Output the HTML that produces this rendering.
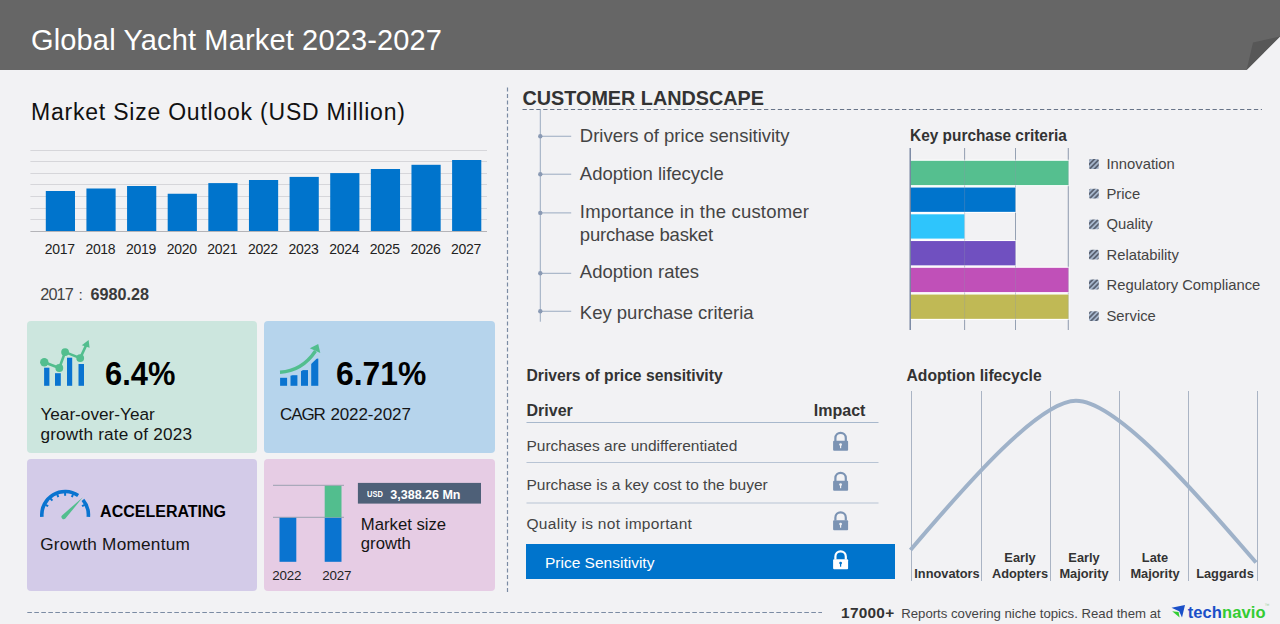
<!DOCTYPE html>
<html><head><meta charset="utf-8"><title>Global Yacht Market 2023-2027</title>
<style>
html,body{margin:0;padding:0;}
body{width:1280px;height:624px;overflow:hidden;position:relative;background:#f2f2f4;font-family:"Liberation Sans", sans-serif;}
.t{position:absolute;white-space:nowrap;line-height:1;}
.r{position:absolute;}
svg.g{position:absolute;left:0;top:0;}
</style></head><body>
<div class="r" style="left:27.0px;top:321.3px;width:230.0px;height:131.8px;background:#cce6de;border-radius:4px"></div>
<div class="r" style="left:264.3px;top:321.3px;width:230.5px;height:131.8px;background:#b6d4ec;border-radius:4px"></div>
<div class="r" style="left:27.2px;top:459.1px;width:229.7px;height:131.6px;background:#d3cbe8;border-radius:4px"></div>
<div class="r" style="left:264.1px;top:459.1px;width:230.6px;height:131.6px;background:#e6cce4;border-radius:4px"></div>
<svg class="g" width="1280" height="624" viewBox="0 0 1280 624">
<defs><pattern id="hatch" patternUnits="userSpaceOnUse" width="3.5" height="3.5" patternTransform="rotate(45)"><rect width="3.5" height="3.5" fill="#a6b6cc"/><rect width="1.75" height="3.5" fill="#5a6272"/></pattern></defs>
<polygon points="0,0 1280,0 1280,36.5 1246.6,70 0,70" fill="#666666"/>
<polygon points="1253,42.5 1280,36.5 1246.6,70" fill="#575757"/>
<line x1="30.4" y1="150.5" x2="487" y2="150.5" stroke="#d6d6da" stroke-width="1"/>
<line x1="30.4" y1="161.5" x2="487" y2="161.5" stroke="#d6d6da" stroke-width="1"/>
<line x1="30.4" y1="173.5" x2="487" y2="173.5" stroke="#d6d6da" stroke-width="1"/>
<line x1="30.4" y1="184.5" x2="487" y2="184.5" stroke="#d6d6da" stroke-width="1"/>
<line x1="30.4" y1="196.5" x2="487" y2="196.5" stroke="#d6d6da" stroke-width="1"/>
<line x1="30.4" y1="208.5" x2="487" y2="208.5" stroke="#d6d6da" stroke-width="1"/>
<line x1="30.4" y1="219.5" x2="487" y2="219.5" stroke="#d6d6da" stroke-width="1"/>
<line x1="30.4" y1="231.5" x2="487" y2="231.5" stroke="#b4b4b8" stroke-width="1"/>
<rect x="45.80" y="191" width="29.2" height="40.00" fill="#0074cc"/>
<rect x="86.43" y="188.5" width="29.2" height="42.50" fill="#0074cc"/>
<rect x="127.06" y="186" width="29.2" height="45.00" fill="#0074cc"/>
<rect x="167.69" y="193.75" width="29.2" height="37.25" fill="#0074cc"/>
<rect x="208.32" y="183.1" width="29.2" height="47.90" fill="#0074cc"/>
<rect x="248.95" y="180" width="29.2" height="51.00" fill="#0074cc"/>
<rect x="289.58" y="176.9" width="29.2" height="54.10" fill="#0074cc"/>
<rect x="330.21" y="173.1" width="29.2" height="57.90" fill="#0074cc"/>
<rect x="370.84" y="169" width="29.2" height="62.00" fill="#0074cc"/>
<rect x="411.47" y="164.8" width="29.2" height="66.20" fill="#0074cc"/>
<rect x="452.10" y="160" width="29.2" height="71.00" fill="#0074cc"/>
<rect x="44.1" y="367.7" width="5.3" height="18.1" fill="#0a74d0"/>
<rect x="55" y="373.2" width="5.8" height="12.6" fill="#0a74d0"/>
<rect x="67" y="357.7" width="5.2" height="28.1" fill="#0a74d0"/>
<rect x="78.5" y="364" width="5.5" height="21.8" fill="#0a74d0"/>
<polyline points="44.3,362.2 59.3,368 65.1,352.1 80.2,358.1 86.5,344.5" fill="none" stroke="#52be8e" stroke-width="2.6" stroke-linejoin="round"/>
<polygon points="88.6,340 81.8,345.2 89.6,347.8" fill="#52be8e"/>
<circle cx="44.3" cy="362.2" r="4.2" fill="#52be8e"/>
<circle cx="59.3" cy="368" r="3.9" fill="#52be8e"/>
<circle cx="65.1" cy="352.1" r="3.9" fill="#52be8e"/>
<circle cx="80.2" cy="358.1" r="3.9" fill="#52be8e"/>
<rect x="280.1" y="377.8" width="7.0" height="8.0" fill="#0a74d0"/>
<rect x="290.5" y="375.2" width="6.9" height="10.6" fill="#0a74d0"/>
<rect x="301" y="370.1" width="7.0" height="15.7" fill="#0a74d0"/>
<rect x="311.2" y="358.6" width="7.1" height="27.2" fill="#0a74d0"/>
<path d="M279,376.8 Q300,378 320,355 L320,340 L279,340 Z" fill="#b6d4ec"/>
<path d="M280,372.2 Q302,371 315.5,351" fill="none" stroke="#52be8e" stroke-width="3.4"/>
<polygon points="318.2,344 309.8,348.2 320.3,353" fill="#52be8e"/>
<path d="M41.89,516.83 A23.3,23.3 0 0 1 78.13,495.48" fill="none" stroke="#0a74d0" stroke-width="3.6"/>
<path d="M82.95,499.82 A23.3,23.3 0 0 1 88.31,516.83" fill="none" stroke="#0a74d0" stroke-width="3.6"/>
<line x1="45.50" y1="504.81" x2="48.17" y2="506.17" stroke="#0a74d0" stroke-width="2"/>
<line x1="50.38" y1="498.45" x2="52.39" y2="500.68" stroke="#0a74d0" stroke-width="2"/>
<line x1="57.22" y1="494.26" x2="58.29" y2="497.06" stroke="#0a74d0" stroke-width="2"/>
<line x1="65.10" y1="492.80" x2="65.10" y2="495.80" stroke="#0a74d0" stroke-width="2"/>
<line x1="72.98" y1="494.26" x2="71.91" y2="497.06" stroke="#0a74d0" stroke-width="2"/>
<line x1="84.70" y1="504.81" x2="82.03" y2="506.17" stroke="#0a74d0" stroke-width="2"/>
<path d="M62.2,515.2 L82.8,497.3 L65.4,518.6 A2.2,2.2 0 0 1 62.2,515.2 Z" fill="#52be8e"/>
<line x1="273" y1="485.3" x2="344" y2="485.3" stroke="#9aa0b0" stroke-width="1"/>
<line x1="273" y1="517.3" x2="344" y2="517.3" stroke="#9aa0b0" stroke-width="1"/>
<rect x="279.5" y="517.8" width="16.8" height="44" fill="#0a74d0"/>
<rect x="324.7" y="517.8" width="16.8" height="44" fill="#0a74d0"/>
<rect x="324.7" y="485.8" width="16.8" height="31.5" fill="#52be8e"/>
<rect x="357.9" y="482.9" width="123.1" height="20.7" fill="#4e6078"/>
<line x1="507.5" y1="87.5" x2="507.5" y2="592.5" stroke="#7b8ba3" stroke-width="1.2" stroke-dasharray="4,2.5"/>
<line x1="522.5" y1="109.5" x2="1262" y2="109.5" stroke="#687488" stroke-width="1.2" stroke-dasharray="4.3,2.6"/>
<line x1="27.3" y1="612.5" x2="822" y2="612.5" stroke="#7b8ba3" stroke-width="1.1" stroke-dasharray="4.6,2.4"/>
<line x1="540.3" y1="109.5" x2="540.3" y2="321.7" stroke="#9aaac0" stroke-width="1"/>
<line x1="540.3" y1="136.25" x2="571.2" y2="136.25" stroke="#9aaac0" stroke-width="1"/>
<circle cx="540.3" cy="136.25" r="2.2" fill="#8a9ab4"/>
<line x1="540.3" y1="174.2" x2="571.2" y2="174.2" stroke="#9aaac0" stroke-width="1"/>
<circle cx="540.3" cy="174.2" r="2.2" fill="#8a9ab4"/>
<line x1="540.3" y1="212.9" x2="571.2" y2="212.9" stroke="#9aaac0" stroke-width="1"/>
<circle cx="540.3" cy="212.9" r="2.2" fill="#8a9ab4"/>
<line x1="540.3" y1="273.3" x2="571.2" y2="273.3" stroke="#9aaac0" stroke-width="1"/>
<circle cx="540.3" cy="273.3" r="2.2" fill="#8a9ab4"/>
<line x1="540.3" y1="311.25" x2="571.2" y2="311.25" stroke="#9aaac0" stroke-width="1"/>
<circle cx="540.3" cy="311.25" r="2.2" fill="#8a9ab4"/>
<line x1="964.6" y1="148" x2="964.6" y2="330" stroke="#9aa6b8" stroke-width="1"/>
<line x1="1015.5" y1="148" x2="1015.5" y2="330" stroke="#9aa6b8" stroke-width="1"/>
<line x1="1068.3" y1="148" x2="1068.3" y2="330" stroke="#9aa6b8" stroke-width="1"/>
<rect x="910" y="159.70" width="159.3" height="26.50" fill="#ffffff"/>
<rect x="910" y="186.45" width="106.3" height="26.50" fill="#ffffff"/>
<rect x="910" y="213.20" width="55.3" height="26.50" fill="#ffffff"/>
<rect x="910" y="239.95" width="106.3" height="26.50" fill="#ffffff"/>
<rect x="910" y="266.70" width="159.3" height="26.50" fill="#ffffff"/>
<rect x="910" y="293.45" width="159.3" height="26.50" fill="#ffffff"/>
<rect x="910.5" y="160.80" width="158" height="24.3" fill="#55bf8f"/>
<rect x="910.5" y="187.55" width="105" height="24.3" fill="#0074cc"/>
<rect x="910.5" y="214.30" width="54" height="24.3" fill="#2ec5fc"/>
<rect x="910.5" y="241.05" width="105" height="24.3" fill="#7050c0"/>
<rect x="910.5" y="267.80" width="158" height="24.3" fill="#c050b8"/>
<rect x="910.5" y="294.55" width="158" height="24.3" fill="#c0b955"/>
<line x1="964.6" y1="148" x2="964.6" y2="330" stroke="#8a96aa" stroke-opacity="0.3" stroke-width="1"/>
<line x1="1015.5" y1="148" x2="1015.5" y2="330" stroke="#8a96aa" stroke-opacity="0.3" stroke-width="1"/>
<line x1="1068.3" y1="148" x2="1068.3" y2="330" stroke="#8a96aa" stroke-opacity="0.3" stroke-width="1"/>
<line x1="910.2" y1="148" x2="910.2" y2="330" stroke="#6a7a98" stroke-width="1.3"/>
<rect x="1089" y="159.1" width="9.8" height="9.8" rx="1.5" fill="url(#hatch)"/>
<rect x="1089" y="188.8" width="9.8" height="9.8" rx="1.5" fill="url(#hatch)"/>
<rect x="1089" y="219.4" width="9.8" height="9.8" rx="1.5" fill="url(#hatch)"/>
<rect x="1089" y="249.7" width="9.8" height="9.8" rx="1.5" fill="url(#hatch)"/>
<rect x="1089" y="279.6" width="9.8" height="9.8" rx="1.5" fill="url(#hatch)"/>
<rect x="1089" y="311.2" width="9.8" height="9.8" rx="1.5" fill="url(#hatch)"/>
<line x1="526.5" y1="422.5" x2="878.5" y2="422.5" stroke="#a8b8cc" stroke-width="1.2"/>
<line x1="526.5" y1="462.5" x2="878.5" y2="462.5" stroke="#b8c4d4" stroke-width="1.2"/>
<line x1="526.5" y1="503" x2="878.5" y2="503" stroke="#b8c4d4" stroke-width="1.2"/>
<rect x="526" y="544" width="369" height="35" fill="#0074cc"/>
<path d="M835.4,441 V438 A5.2,5.2 0 0 1 845.8000000000001,438 V441" fill="none" stroke="#7b93b3" stroke-width="2.2"/>
<rect x="833.1" y="440.8" width="15" height="10" rx="1" fill="#7b93b3"/>
<circle cx="840.6" cy="444.6" r="1.4" fill="#f2f2f4"/>
<rect x="840.0" y="444.6" width="1.2" height="3.6" fill="#f2f2f4"/>
<path d="M835.4,481 V478 A5.2,5.2 0 0 1 845.8000000000001,478 V481" fill="none" stroke="#7b93b3" stroke-width="2.2"/>
<rect x="833.1" y="480.8" width="15" height="10" rx="1" fill="#7b93b3"/>
<circle cx="840.6" cy="484.6" r="1.4" fill="#f2f2f4"/>
<rect x="840.0" y="484.6" width="1.2" height="3.6" fill="#f2f2f4"/>
<path d="M835.4,520.5 V517.5 A5.2,5.2 0 0 1 845.8000000000001,517.5 V520.5" fill="none" stroke="#7b93b3" stroke-width="2.2"/>
<rect x="833.1" y="520.3" width="15" height="10" rx="1" fill="#7b93b3"/>
<circle cx="840.6" cy="524.1" r="1.4" fill="#f2f2f4"/>
<rect x="840.0" y="524.1" width="1.2" height="3.6" fill="#f2f2f4"/>
<path d="M835.4,559.5 V556.5 A5.2,5.2 0 0 1 845.8000000000001,556.5 V559.5" fill="none" stroke="#ffffff" stroke-width="2.2"/>
<rect x="833.1" y="559.3" width="15" height="10" rx="1" fill="#ffffff"/>
<circle cx="840.6" cy="563.1" r="1.4" fill="#0074cc"/>
<rect x="840.0" y="563.1" width="1.2" height="3.6" fill="#0074cc"/>
<line x1="911.5" y1="391" x2="911.5" y2="581" stroke="#aab4c4" stroke-width="1"/>
<line x1="981.5" y1="391" x2="981.5" y2="581" stroke="#aab4c4" stroke-width="1"/>
<line x1="1050.5" y1="391" x2="1050.5" y2="581" stroke="#aab4c4" stroke-width="1"/>
<line x1="1119.5" y1="391" x2="1119.5" y2="581" stroke="#aab4c4" stroke-width="1"/>
<line x1="1188.5" y1="391" x2="1188.5" y2="581" stroke="#aab4c4" stroke-width="1"/>
<line x1="1257.5" y1="391" x2="1257.5" y2="581" stroke="#aab4c4" stroke-width="1"/>
<path d="M910.5,550 C970,480 1040,400.8 1076,400.8 C1120,400.8 1210,510 1256,562.5" fill="none" stroke="#9fb2c9" stroke-width="4"/>
<path d="M1171.5,607.8 L1185,605 L1182,617.5 L1179.2,611.3 Z" fill="#1a4fc8"/>
<path d="M1172.2,611.2 L1178.6,611.9 L1179.6,617.4 Z" fill="#33cc33"/>
</svg>
<div class="t" style="left:31.0px;top:25.5px;font-size:29px;font-weight:400;color:#ffffff;letter-spacing:0.15px">Global Yacht Market 2023-2027</div>
<div class="t" style="left:31.0px;top:100.8px;font-size:23px;font-weight:400;color:#111;letter-spacing:0.78px">Market Size Outlook (USD Million)</div>
<div class="t" style="left:44.8px;top:241.8px;font-size:14px;font-weight:400;color:#222;letter-spacing:-0.3px">2017</div>
<div class="t" style="left:85.4px;top:241.8px;font-size:14px;font-weight:400;color:#222;letter-spacing:-0.3px">2018</div>
<div class="t" style="left:126.1px;top:241.8px;font-size:14px;font-weight:400;color:#222;letter-spacing:-0.3px">2019</div>
<div class="t" style="left:166.7px;top:241.8px;font-size:14px;font-weight:400;color:#222;letter-spacing:-0.3px">2020</div>
<div class="t" style="left:207.3px;top:241.8px;font-size:14px;font-weight:400;color:#222;letter-spacing:-0.3px">2021</div>
<div class="t" style="left:247.9px;top:241.8px;font-size:14px;font-weight:400;color:#222;letter-spacing:-0.3px">2022</div>
<div class="t" style="left:288.6px;top:241.8px;font-size:14px;font-weight:400;color:#222;letter-spacing:-0.3px">2023</div>
<div class="t" style="left:329.2px;top:241.8px;font-size:14px;font-weight:400;color:#222;letter-spacing:-0.3px">2024</div>
<div class="t" style="left:369.8px;top:241.8px;font-size:14px;font-weight:400;color:#222;letter-spacing:-0.3px">2025</div>
<div class="t" style="left:410.5px;top:241.8px;font-size:14px;font-weight:400;color:#222;letter-spacing:-0.3px">2026</div>
<div class="t" style="left:451.1px;top:241.8px;font-size:14px;font-weight:400;color:#222;letter-spacing:-0.3px">2027</div>
<div class="t" style="left:40.2px;top:286.2px;font-size:16.3px;font-weight:400;color:#444;letter-spacing:-0.85px">2017</div>
<div class="t" style="left:78.6px;top:286.9px;font-size:15.5px;font-weight:400;color:#444;">:</div>
<div class="t" style="left:90.6px;top:285.6px;font-size:16.2px;font-weight:700;color:#3a3a3a;">6980.28</div>
<div class="t" style="left:105.2px;top:357.1px;font-size:33px;font-weight:700;color:#000;transform:scaleX(0.935);transform-origin:0 0">6.4%</div>
<div class="t" style="left:40.4px;top:406.4px;font-size:17.2px;font-weight:400;color:#151515;">Year-over-Year</div>
<div class="t" style="left:40.4px;top:425.7px;font-size:17.2px;font-weight:400;color:#151515;letter-spacing:0.2px">growth rate of 2023</div>
<div class="t" style="left:335.6px;top:357.1px;font-size:33px;font-weight:700;color:#000;transform:scaleX(0.965);transform-origin:0 0">6.71%</div>
<div class="t" style="left:280.0px;top:405.6px;font-size:17px;font-weight:400;color:#151515;letter-spacing:-1.1px">CAGR</div>
<div class="t" style="left:330.4px;top:405.6px;font-size:17px;font-weight:400;color:#151515;letter-spacing:-0.1px">2022-2027</div>
<div class="t" style="left:100.1px;top:503.8px;font-size:16px;font-weight:700;color:#000;">ACCELERATING</div>
<div class="t" style="left:40.2px;top:535.7px;font-size:17.2px;font-weight:400;color:#151515;letter-spacing:0.25px">Growth Momentum</div>
<div class="t" style="left:272.3px;top:568.5px;font-size:13.4px;font-weight:400;color:#222;letter-spacing:-0.2px">2022</div>
<div class="t" style="left:322.3px;top:568.5px;font-size:13.4px;font-weight:400;color:#222;letter-spacing:-0.2px">2027</div>
<div class="t" style="left:367.4px;top:489.0px;font-size:9.4px;font-weight:700;color:#fff;transform:scaleX(0.8);transform-origin:0 0">USD</div>
<div class="t" style="left:390.3px;top:488.6px;font-size:12.5px;font-weight:700;color:#fff;">3,388.26 Mn</div>
<div class="t" style="left:360.8px;top:516.9px;font-size:16.7px;font-weight:400;color:#151515;">Market size</div>
<div class="t" style="left:360.8px;top:536.4px;font-size:16.7px;font-weight:400;color:#151515;">growth</div>
<div class="t" style="left:522.5px;top:89.0px;font-size:19.8px;font-weight:700;color:#333;">CUSTOMER&nbsp;LANDSCAPE</div>
<div class="t" style="left:579.8px;top:127.1px;font-size:18.5px;font-weight:400;color:#444;">Drivers of price sensitivity</div>
<div class="t" style="left:579.8px;top:165.2px;font-size:18.5px;font-weight:400;color:#444;">Adoption lifecycle</div>
<div class="t" style="left:579.8px;top:202.8px;font-size:18.5px;font-weight:400;color:#444;letter-spacing:0.2px">Importance in the customer</div>
<div class="t" style="left:579.8px;top:263.2px;font-size:18.5px;font-weight:400;color:#444;">Adoption rates</div>
<div class="t" style="left:579.8px;top:303.5px;font-size:18.5px;font-weight:400;color:#444;">Key purchase criteria</div>
<div class="t" style="left:579.8px;top:225.5px;font-size:18.5px;font-weight:400;color:#444;letter-spacing:-0.18px">purchase basket</div>
<div class="t" style="left:909.6px;top:126.6px;font-size:16.5px;font-weight:700;color:#333;transform:scaleX(0.934);transform-origin:0 0">Key purchase criteria</div>
<div class="t" style="left:1106.5px;top:157.1px;font-size:14.8px;font-weight:400;color:#444;">Innovation</div>
<div class="t" style="left:1106.5px;top:186.8px;font-size:14.8px;font-weight:400;color:#444;">Price</div>
<div class="t" style="left:1106.5px;top:217.4px;font-size:14.8px;font-weight:400;color:#444;">Quality</div>
<div class="t" style="left:1106.5px;top:247.7px;font-size:14.8px;font-weight:400;color:#444;">Relatability</div>
<div class="t" style="left:1106.5px;top:277.6px;font-size:14.8px;font-weight:400;color:#444;">Regulatory Compliance</div>
<div class="t" style="left:1106.5px;top:309.2px;font-size:14.8px;font-weight:400;color:#444;">Service</div>
<div class="t" style="left:526.5px;top:367.9px;font-size:15.7px;font-weight:700;color:#333;">Drivers of price sensitivity</div>
<div class="t" style="left:526.5px;top:402.5px;font-size:16px;font-weight:700;color:#333;">Driver</div>
<div class="t" style="left:813.8px;top:402.5px;font-size:16px;font-weight:700;color:#333;">Impact</div>
<div class="t" style="left:526.5px;top:438.1px;font-size:15.5px;font-weight:400;color:#444;">Purchases are undifferentiated</div>
<div class="t" style="left:526.5px;top:476.5px;font-size:15.5px;font-weight:400;color:#444;">Purchase is a key cost to the buyer</div>
<div class="t" style="left:526.5px;top:515.7px;font-size:15.5px;font-weight:400;color:#444;letter-spacing:0.3px">Quality is not important</div>
<div class="t" style="left:545.0px;top:555.4px;font-size:15.5px;font-weight:400;color:#fff;">Price Sensitivity</div>
<div class="t" style="left:906.5px;top:367.7px;font-size:15.7px;font-weight:700;color:#333;">Adoption lifecycle</div>
<div class="t" style="left:887.0px;width:120px;text-align:center;top:568.2px;font-size:12.8px;font-weight:700;color:#333">Innovators</div>
<div class="t" style="left:960.0px;width:120px;text-align:center;top:552.2px;font-size:12.8px;font-weight:700;color:#333">Early</div>
<div class="t" style="left:960.0px;width:120px;text-align:center;top:568.2px;font-size:12.8px;font-weight:700;color:#333">Adopters</div>
<div class="t" style="left:1024.0px;width:120px;text-align:center;top:552.2px;font-size:12.8px;font-weight:700;color:#333">Early</div>
<div class="t" style="left:1024.0px;width:120px;text-align:center;top:568.2px;font-size:12.8px;font-weight:700;color:#333">Majority</div>
<div class="t" style="left:1095.0px;width:120px;text-align:center;top:552.2px;font-size:12.8px;font-weight:700;color:#333">Late</div>
<div class="t" style="left:1095.0px;width:120px;text-align:center;top:568.2px;font-size:12.8px;font-weight:700;color:#333">Majority</div>
<div class="t" style="left:1165.0px;width:120px;text-align:center;top:568.2px;font-size:12.8px;font-weight:700;color:#333">Laggards</div>
<div class="t" style="left:841.1px;top:605.1px;font-size:15.4px;font-weight:700;color:#333;letter-spacing:0.25px">17000+</div>
<div class="t" style="left:901.2px;top:606.8px;font-size:13.2px;font-weight:400;color:#444;">Reports covering niche topics. Read them at</div>
<div class="t" style="left:1187.7px;top:603.5px;font-size:16.5px;font-weight:700;color:#1a4fc8;letter-spacing:0.1px">tech</div>
<div class="t" style="left:1222.0px;top:603.5px;font-size:16.5px;font-weight:700;color:#33cc33;letter-spacing:0.1px">navio</div>
<div class="t" style="left:1264.5px;top:602.8px;font-size:5px;font-weight:400;color:#9ad09a;">&#8482;</div>
</body></html>
